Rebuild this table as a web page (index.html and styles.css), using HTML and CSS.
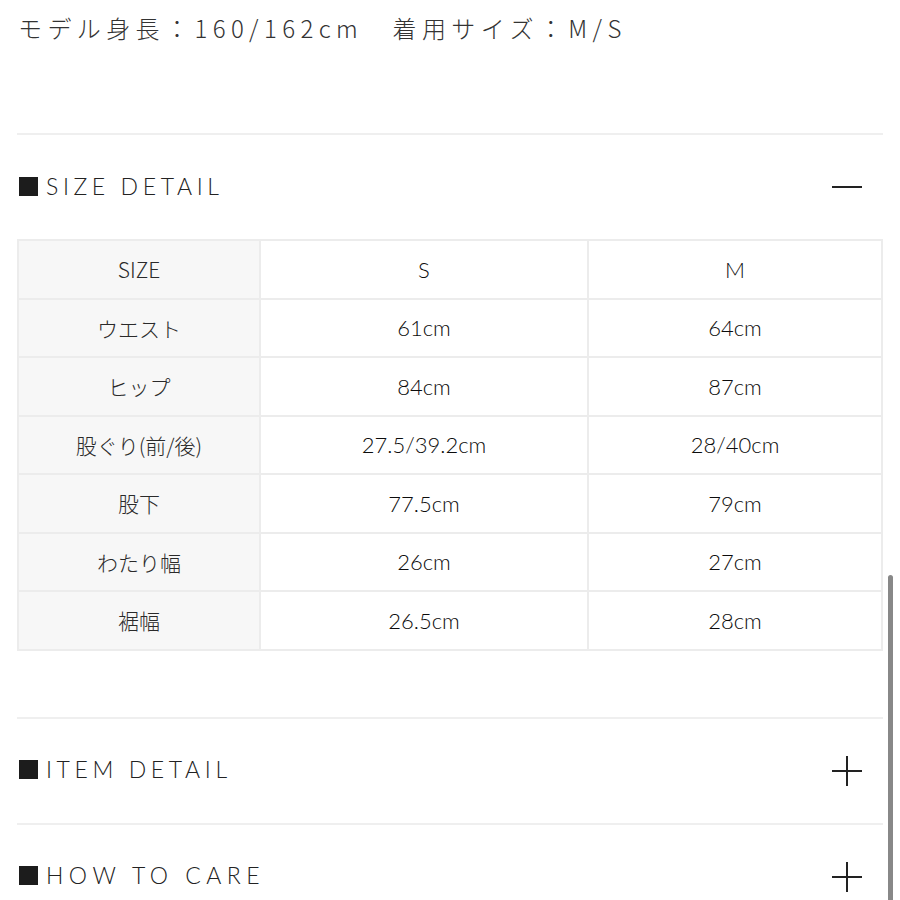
FILE: index.html
```html
<!DOCTYPE html>
<html lang="ja">
<head>
<meta charset="utf-8">
<link rel="stylesheet" href="styles.css">
</head>
<body>
<div class="page">
  <p class="model">モデル身長：160/162cm　着用サイズ：M/S</p>

  <section class="acc">
    <div class="acc-head">
      <span class="mark"></span><span class="title">SIZE DETAIL</span>
      <span class="icon minus"></span>
    </div>
    <table class="size">
      <tr><th>SIZE</th><td>S</td><td>M</td></tr>
      <tr><th>ウエスト</th><td>61cm</td><td>64cm</td></tr>
      <tr><th>ヒップ</th><td>84cm</td><td>87cm</td></tr>
      <tr><th>股ぐり(前/後)</th><td>27.5/39.2cm</td><td>28/40cm</td></tr>
      <tr><th>股下</th><td>77.5cm</td><td>79cm</td></tr>
      <tr><th>わたり幅</th><td>26cm</td><td>27cm</td></tr>
      <tr><th>裾幅</th><td>26.5cm</td><td>28cm</td></tr>
    </table>
  </section>

  <section class="acc">
    <div class="acc-head">
      <span class="mark"></span><span class="title">ITEM DETAIL</span>
      <span class="icon plus"></span>
    </div>
  </section>

  <section class="acc">
    <div class="acc-head">
      <span class="mark"></span><span class="title wide">HOW TO CARE</span>
      <span class="icon plus"></span>
    </div>
  </section>
</div>
<div class="scrollbar"></div>
</body>
</html>
```

FILE: styles.css
```css
html, body {
  margin: 0;
  padding: 0;
  background: #fff;
  overflow: hidden;
}
body {
  font-family: "Noto Sans CJK JP", "Noto Sans", sans-serif;
  color: #222;
}
.page {
  width: 866px;
  padding: 0 17px;
}
.model {
  margin: 0;
  height: 133px;
  padding-top: 12px;
  box-sizing: border-box;
  font-size: 24px;
  line-height: 32px;
  letter-spacing: 5.4px;
  font-weight: 300;
  color: #333;
  padding-left: 1px;
}
.acc {
  border-top: 2px solid #efefef;
}
.acc-head {
  height: 104px;
  display: flex;
  align-items: center;
  position: relative;
}
.mark {
  width: 19px;
  height: 19px;
  background: #1c1c1c;
  margin-left: 2px;
  margin-right: 8px;
  margin-top: -2px;
}
.title {
  font-family: "Lato", "Noto Sans", sans-serif;
  font-weight: 300;
  font-size: 23px;
  line-height: 28px;
  letter-spacing: 4.6px;
  color: #222;
  margin-top: -3px;
}
.title.wide {
  letter-spacing: 5.5px;
}
.icon {
  margin-left: auto;
  margin-right: 21px;
  width: 30px;
  height: 30px;
  position: relative;
}
.icon::before, .icon::after {
  content: "";
  position: absolute;
  background: #222;
}
.icon::before {
  left: 0;
  right: 0;
  top: 14px;
  height: 2px;
}
.plus::after {
  top: 0;
  bottom: 0;
  left: 14px;
  width: 2px;
}
.size {
  width: 866px;
  border-collapse: collapse;
  table-layout: fixed;
  margin-bottom: 66px;
  font-family: "Lato", "Noto Sans CJK JP", sans-serif;
  font-size: 22px;
}
.size th, .size td {
  height: 56.5px;
  border: 2px solid #ececec;
  text-align: center;
  font-weight: 300;
  color: #0c0c0c;
  padding: 0;
}
.size th {
  width: 240px;
  background: #f7f7f7;
  font-family: "Noto Sans CJK JP", sans-serif;
  font-size: 21px;
  color: #2a2a2a;
}
.size td:nth-child(2) { width: 326px; }
.scrollbar {
  position: absolute;
  left: 888px;
  top: 575px;
  width: 5px;
  height: 325px;
  background: #888;
  border-radius: 3px 3px 0 0;
}
```
